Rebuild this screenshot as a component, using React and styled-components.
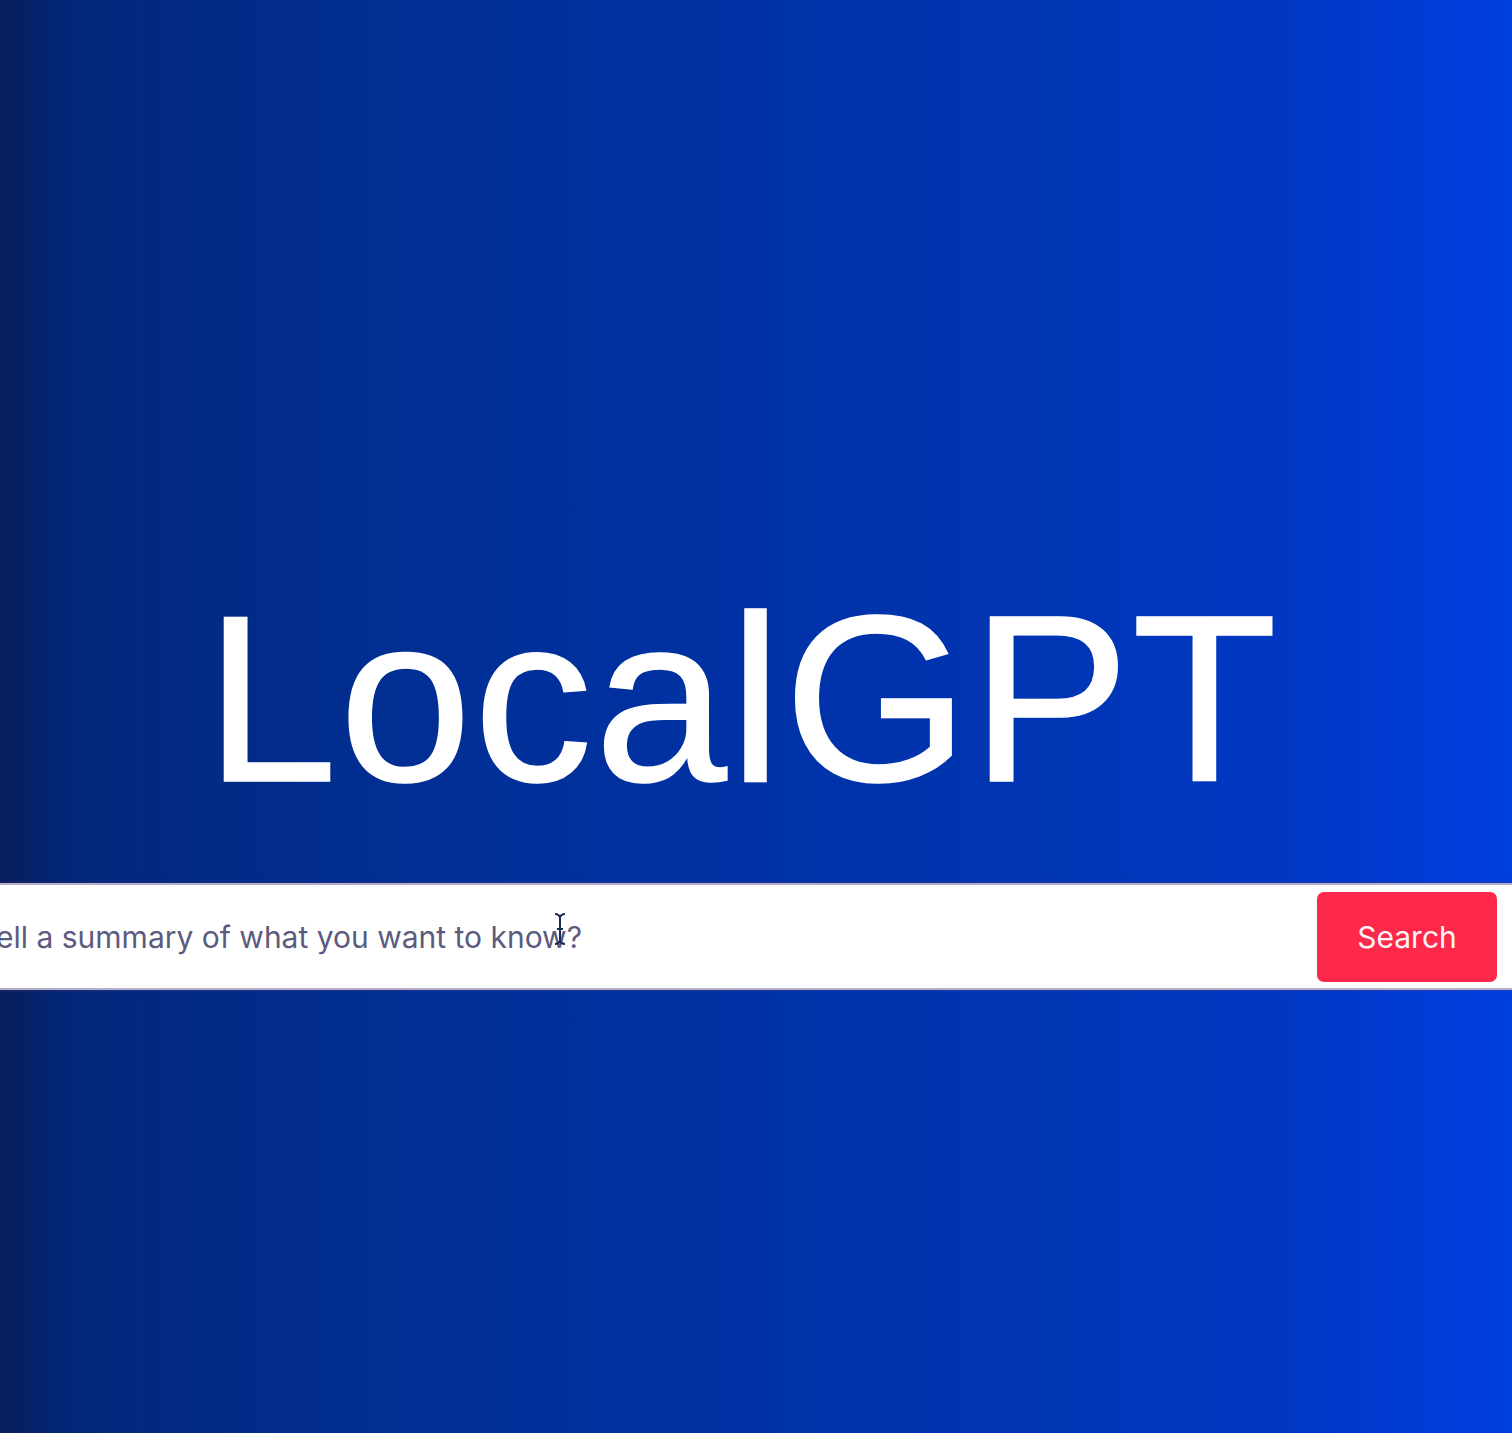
import React from 'react';
import styled, { createGlobalStyle } from 'styled-components';

const GlobalStyle = createGlobalStyle`
  html, body {
    margin: 0;
    padding: 0;
    overflow: hidden;
  }
  body {
    font-family: Inter, "Liberation Sans", sans-serif;
  }
`;

const Page = styled.div`
  width: 100%;
  height: 1433px;
  display: flex;
  flex-direction: column;
  background: linear-gradient(
    to right,
    #0a1d58 0%,
    #032677 4%,
    #022a84 12%,
    #012e92 25%,
    #0032a6 50%,
    #0035b4 70%,
    #0038c4 85%,
    #003ee0 100%
  );
`;

const Hero = styled.div`
  flex-shrink: 0;
  height: 883px;
  display: flex;
  justify-content: center;
  align-items: flex-end;
  padding: 0 28px 65px 0;
  box-sizing: border-box;
`;

const Title = styled.h1`
  margin: 0;
  font-family: "Liberation Sans", Arial, sans-serif;
  font-weight: 400;
  font-size: 238px;
  line-height: 1;
  letter-spacing: 2px;
  color: #ffffff;
  -webkit-text-stroke: 1.5px #ffffff;
`;

const SearchBar = styled.form`
  position: relative;
  flex-shrink: 0;
  display: flex;
  align-items: center;
  gap: 16px;
  height: 107px;
  padding: 0 15px 0 0;
  background: #ffffff;
  border-top: 2px solid #b4aec6;
  border-bottom: 2px solid #b4aec6;
  box-shadow: 0 0 3px rgba(80, 60, 140, 0.7);
  box-sizing: border-box;
`;

const Input = styled.input`
  flex: 1;
  min-width: 0;
  height: 100%;
  border: none;
  outline: none;
  background: transparent;
  padding: 0;
  text-indent: -21px;
  font-family: Inter, "Liberation Sans", sans-serif;
  font-size: 30px;
  color: #56557a;

  &::placeholder {
    color: #5c5b7e;
    opacity: 1;
  }
`;

const Button = styled.button`
  width: 180px;
  height: 90px;
  border: none;
  border-radius: 7px;
  background: #fd284a;
  color: #fdf2f6;
  font-family: Inter, "Liberation Sans", sans-serif;
  font-size: 30px;
  cursor: pointer;
`;

const Caret = styled.svg`
  position: absolute;
  left: 552px;
  top: 27px;
`;

export default function App() {
  return (
    <>
      <GlobalStyle />
      <Page>
        <Hero>
          <Title>LocalGPT</Title>
        </Hero>
        <SearchBar onSubmit={(e) => e.preventDefault()}>
          <Input placeholder="Tell a summary of what you want to know?" />
          <Button type="submit">Search</Button>
          <Caret width="16" height="34" viewBox="0 0 16 34">
            <path
              d="M3 2 C6 2 7 3 8 5 C9 3 10 2 13 2 M8 5 V29 M3 32 C6 32 7 31 8 29 C9 31 10 32 13 32 M5 17 H11"
              fill="none"
              stroke="#1c2a5a"
              strokeWidth="2"
            />
          </Caret>
        </SearchBar>
      </Page>
    </>
  );
}
